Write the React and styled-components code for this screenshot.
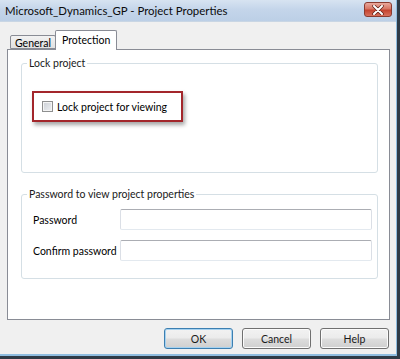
import styled, { createGlobalStyle } from 'styled-components'

const Global = createGlobalStyle`
    html, body {
        margin: 0;
        padding: 0;
        background: #2f3b47;
    }
    body {
        font-family: Lato, "Noto Sans", sans-serif;
        font-size: 10.5px;
        color: #000;
    }
`

const Window = styled.div`
    width: 397px;
    height: 356px;
    background: #f0f0f0;
    border-right: 1px solid #8fbde0;
    border-bottom: 2px solid #8fbde0;
    display: flex;
    flex-direction: column;
    box-sizing: border-box;
`

const TitleBar = styled.div`
    height: 21px;
    flex: none;
    display: flex;
    align-items: center;
    justify-content: space-between;
    padding: 0 4px 0 5px;
    background: linear-gradient(to bottom, #d7e3f1 0%, #c4d5ea 45%, #bccfe6 100%);
    border-bottom: 1px solid #c9d6e4;
`

const Title = styled.span`
    font-size: 11.4px;
    color: #0b0b0b;
`

const CloseButton = styled.div`
    width: 28px;
    height: 15px;
    margin-top: -2px;
    border: 1px solid #8a3b30;
    border-radius: 3px;
    box-sizing: border-box;
    display: flex;
    align-items: center;
    justify-content: center;
    background: linear-gradient(to bottom, #e9a89c 0%, #d77563 45%, #c4432f 55%, #d8705d 100%);
`

const Body = styled.div`
    flex: 1;
    display: flex;
    flex-direction: column;
    padding: 8px 6px 0 7px;
`

const TabStrip = styled.div`
    display: flex;
    align-items: flex-end;
    padding-left: 3px;
    height: 19px;
`

const Tab = styled.div`
    box-sizing: border-box;
    height: ${p => (p.active ? '20px' : '14px')};
    padding: ${p => (p.active ? '3px 6px 0 6px' : '1px 4px 0 4px')};
    margin-left: ${p => (p.active ? '-1px' : '0')};
    margin-bottom: ${p => (p.active ? '-1px' : '0')};
    border: 1px solid #898c95;
    border-bottom: ${p => (p.active ? 'none' : '1px solid #898c95')};
    border-radius: 2px 2px 0 0;
    background: ${p => (p.active ? '#fff' : 'linear-gradient(to bottom, #f2f2f2, #e1e1e1)')};
    position: relative;
    z-index: ${p => (p.active ? 2 : 1)};
    line-height: 12px;
`

const Panel = styled.div`
    height: 271px;
    box-sizing: border-box;
    background: #fff;
    border: 1px solid #898c95;
    padding: 6px 11px 0 13px;
    display: flex;
    flex-direction: column;
    gap: 14px;
`

const Group = styled.fieldset`
    margin: 0;
    padding: 0;
    border: 1px solid #d5dfe5;
    border-radius: 3px;
    height: ${p => p.h}px;
    box-sizing: border-box;
    min-width: 0;
`

const Legend = styled.legend`
    margin-left: 5px;
    padding: 0 2px;
    line-height: 14px;
    color: #1a1a1a;
`

const Highlight = styled.div`
    margin: 21px 0 0 10px;
    width: 151px;
    height: 31px;
    box-sizing: border-box;
    border: 2px solid #a3262b;
    box-shadow: 2px 3px 4px rgba(0, 0, 0, 0.35);
    display: flex;
    align-items: center;
    padding-left: 8px;
    gap: 4px;
    white-space: nowrap;
`

const Checkbox = styled.span`
    width: 11px;
    height: 11px;
    box-sizing: border-box;
    border: 1px solid #8e8f8f;
    background: linear-gradient(135deg, #cbcfd5 0%, #eef0f3 100%);
    box-shadow: inset 0 0 0 1px #f4f4f4;
    flex: none;
`

const Fields = styled.div`
    display: flex;
    flex-direction: column;
    gap: 10px;
    padding: 8px 5px 0 11px;
`

const Row = styled.div`
    display: flex;
    align-items: center;
`

const FieldLabel = styled.span`
    width: 87px;
    flex: none;
    white-space: nowrap;
`

const Input = styled.div`
    flex: 1;
    height: 21px;
    box-sizing: border-box;
    border: 1px solid #dbdfe6;
    border-top-color: #abadb3;
    border-bottom-color: #e3e9ef;
    border-radius: 2px;
    background: #fff;
`

const Footer = styled.div`
    display: flex;
    justify-content: flex-end;
    gap: 9px;
    padding: 8px 1px 0 0;
`

const Button = styled.div`
    width: 69px;
    height: 21px;
    box-sizing: border-box;
    display: flex;
    align-items: center;
    justify-content: center;
    border: 1px solid ${p => (p.primary ? '#3c7fb1' : '#707070')};
    border-radius: 3px;
    background: linear-gradient(to bottom, #f2f2f2 0%, #ebebeb 48%, #dddddd 52%, #cfcfcf 100%);
    box-shadow: inset 0 0 0 1px ${p => (p.primary ? '#a6d2f0' : '#fbfbfb')};
    color: #1a1a1a;
`

const CloseIcon = () => (
    <svg width="12" height="10" viewBox="0 0 12 10">
        <path d="M2 1 L10 9 M10 1 L2 9" stroke="#5a1f18" strokeWidth="3.4" strokeLinecap="round" />
        <path d="M2 1 L10 9 M10 1 L2 9" stroke="#fff" strokeWidth="2" strokeLinecap="round" />
    </svg>
)

const App = () => {
    return (
        <>
            <Global />
            <Window>
                <TitleBar>
                    <Title>Microsoft_Dynamics_GP - Project Properties</Title>
                    <CloseButton>
                        <CloseIcon />
                    </CloseButton>
                </TitleBar>
                <Body>
                    <TabStrip>
                        <Tab>General</Tab>
                        <Tab active>Protection</Tab>
                    </TabStrip>
                    <Panel>
                        <Group h={117}>
                            <Legend>Lock project</Legend>
                            <Highlight>
                                <Checkbox />
                                <span>Lock project for viewing</span>
                            </Highlight>
                        </Group>
                        <Group h={92}>
                            <Legend>Password to view project properties</Legend>
                            <Fields>
                                <Row>
                                    <FieldLabel>Password</FieldLabel>
                                    <Input />
                                </Row>
                                <Row>
                                    <FieldLabel>Confirm password</FieldLabel>
                                    <Input />
                                </Row>
                            </Fields>
                        </Group>
                    </Panel>
                    <Footer>
                        <Button primary>OK</Button>
                        <Button>Cancel</Button>
                        <Button>Help</Button>
                    </Footer>
                </Body>
            </Window>
        </>
    )
}

export default App
